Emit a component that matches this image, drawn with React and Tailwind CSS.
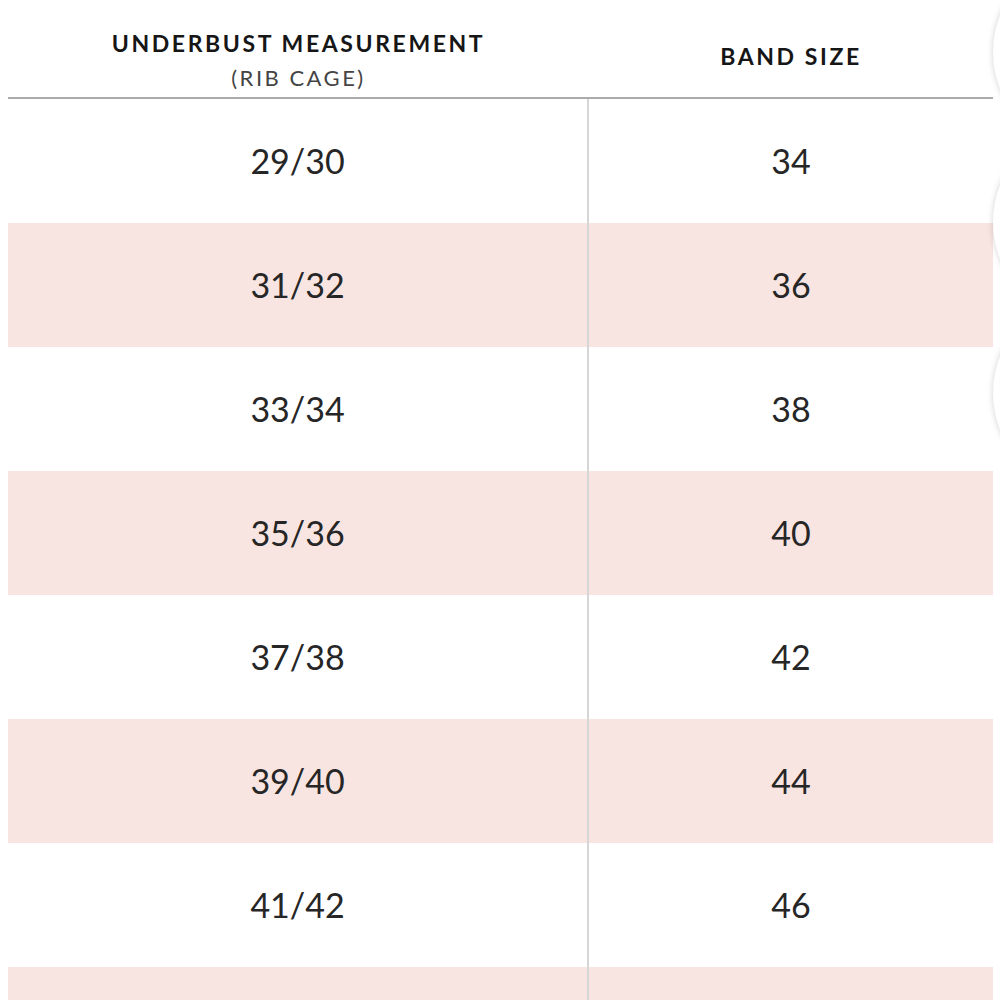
const rows = [
  ["29/30", "34"],
  ["31/32", "36"],
  ["33/34", "38"],
  ["35/36", "40"],
  ["37/38", "42"],
  ["39/40", "44"],
  ["41/42", "46"],
  ["43/44", "48"],
];

export default function App() {
  return (
    <div
      className="relative h-[1000px] w-[1000px] overflow-hidden bg-white text-[#222]"
      style={{ fontFamily: "Lato, 'Noto Sans', sans-serif" }}
    >
      <div className="ml-[8px] w-[985px]">
        {/* header */}
        <div className="flex h-[99px] border-b-2 border-[#ababab]">
          <div className="flex w-[581px] flex-col items-center pt-[31px]">
            <span className="text-[23px] font-bold leading-[24px] tracking-[2.6px] text-[#161616]">
              UNDERBUST MEASUREMENT
            </span>
            <span className="mt-[12px] text-[22px] leading-[22px] tracking-[2.5px] text-[#444]">
              (RIB CAGE)
            </span>
          </div>
          <div className="flex flex-1 justify-center pt-[44px]">
            <span className="text-[23px] font-bold leading-[24px] tracking-[2.6px] text-[#161616]">
              BAND SIZE
            </span>
          </div>
        </div>

        {/* rows */}
        {rows.map(([under, band], i) => (
          <div
            key={under}
            className={
              i % 2 === 1
                ? "flex h-[124px] w-[985px] bg-[#f8e5e2]"
                : "flex h-[124px] w-[985px] bg-white"
            }
          >
            <div className="flex w-[581px] items-center justify-center border-r-2 border-[#d6d6d6] text-[34px] leading-none text-[#262626]">
              {under}
            </div>
            <div className="flex flex-1 items-center justify-center text-[34px] leading-none text-[#262626]">
              {band}
            </div>
          </div>
        ))}
      </div>

      {/* floating buttons cut off at the right edge */}
      <div className="absolute left-[993px] top-[-48px] h-[200px] w-[200px] rounded-full bg-white shadow-[0_0_6px_rgba(0,0,0,0.18)]" />
      <div className="absolute left-[993px] top-[122px] h-[200px] w-[200px] rounded-full bg-white shadow-[0_0_6px_rgba(0,0,0,0.18)]" />
      <div className="absolute left-[993px] top-[293px] h-[200px] w-[200px] rounded-full bg-white shadow-[0_0_6px_rgba(0,0,0,0.18)]" />
    </div>
  );
}
